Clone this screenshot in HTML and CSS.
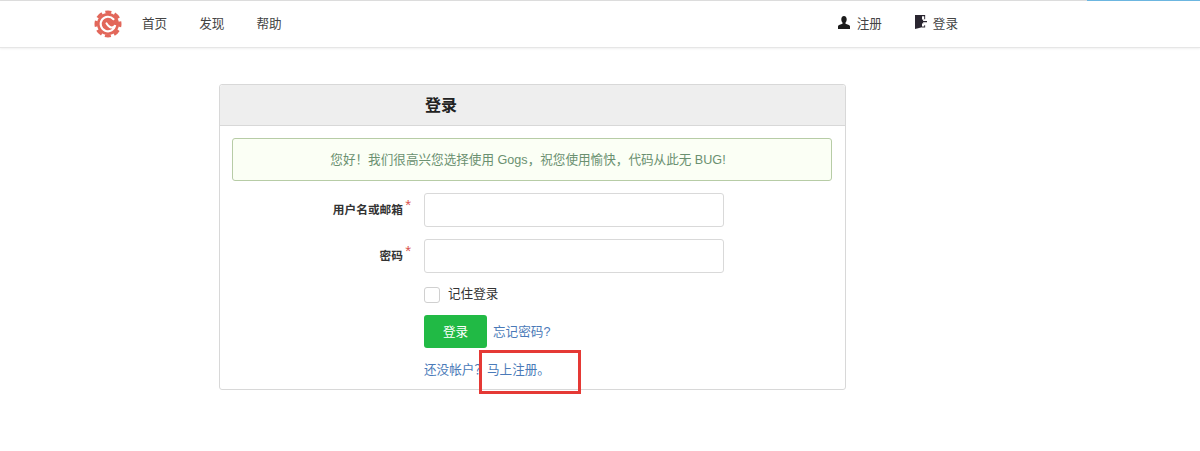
FILE: index.html
```html
<!DOCTYPE html>
<html lang="zh-CN">
<head>
    <meta charset="UTF-8">
    <title>登录 - Gogs</title>
    <link rel="stylesheet" href="styles.css">
</head>
<body>
<div class="top-line"><div class="top-progress"></div></div>
<nav class="navbar">
    <svg class="logo" viewBox="0 0 28 28" width="28" height="28">
        <circle cx="14" cy="14" r="11" fill="#e2675a"/>
        <circle cx="14" cy="14" r="12" fill="none" stroke="#e2675a" stroke-width="3" stroke-dasharray="6 3.420" stroke-dashoffset="3"/>
        <path fill="none" stroke="#fff" stroke-width="2.100" stroke-linecap="round" d="M19.500 9.200a7.300 7.300 0 1 0 1.700 6c-1 2.300-3.500 2.800-5.300 1.800-1.500-.8-2.600-2-3.400-3.600"/>
    </svg>
    <ul class="nav-links">
        <li><a href="#">首页</a></li>
        <li><a href="#">发现</a></li>
        <li><a href="#">帮助</a></li>
    </ul>
    <ul class="nav-links nav-right">
        <li>
            <a href="#">
                <svg class="user-icon" viewBox="0 0 12 13" width="12" height="13"><path fill="#1c1c1c" d="M6 0c1.700 0 2.700 1.300 2.700 3.200 0 1.300-.4 2.600-1.200 3.300v1.300c1.800.6 4.100 1.200 4.500 2.400V13H0v-2.800c.4-1.200 2.700-1.800 4.500-2.400V6.500C3.700 5.800 3.300 4.500 3.300 3.200 3.300 1.300 4.300 0 6 0z"/></svg>
                注册
            </a>
        </li>
        <li>
            <a href="#">
                <svg viewBox="0 0 13 15" width="12" height="14"><path fill="#2a2630" d="M0 0h11v4.500H10V1.200H7.600v12.100L0 15z"/><path fill="#2a2630" d="M10 11h1v2.500H7.600v-1H10z"/><path fill="#2a2630" d="M13 6.300v1.400H8.800v2L5.800 7l3-2.700v2z"/></svg>
                登录
            </a>
        </li>
    </ul>
</nav>

<div class="login-card">
    <h3 class="card-title"><span>登录</span></h3>
    <div class="card-body">
        <div class="message">您好！我们很高兴您选择使用 Gogs，祝您使用愉快，代码从此无 BUG!</div>
        <div class="field">
            <label class="required" for="user">用户名或邮箱</label>
            <input type="text" id="user">
        </div>
        <div class="field">
            <label class="required" for="password">密码</label>
            <input type="password" id="password">
        </div>
        <div class="inline-row remember">
            <span class="checkbox"></span>
            <span>记住登录</span>
        </div>
        <div class="inline-row actions">
            <button class="green-btn">登录</button>
            <a href="#">忘记密码?</a>
        </div>
        <div class="inline-row signup">
            <a href="#">还没帐户？马上注册。</a>
        </div>
    </div>
</div>
<div class="red-mark"></div>
</body>
</html>
```

FILE: styles.css
```css
* {
    margin: 0;
    padding: 0;
    box-sizing: border-box;
}

body {
    font-family: "Liberation Sans", "Noto Sans CJK SC", sans-serif;
    font-size: 12.6px;
    color: #333;
    background: #fff;
}

a {
    color: #4a7ab8;
    text-decoration: none;
}

.top-line {
    display: flex;
    justify-content: flex-end;
    height: 1px;
    background: #ddd;
}

.top-progress {
    width: 113px;
    background: #6cb6e0;
}

.navbar {
    display: flex;
    align-items: center;
    height: 47px;
    padding: 0 242px 4px 94px;
    border-bottom: 1px solid #e6e6e6;
    box-shadow: 0 1px 2px rgba(0, 0, 0, 0.06);
}

.logo {
    margin-top: 4px;
}

.nav-links {
    display: flex;
    gap: 32px;
    list-style: none;
    margin-left: 20px;
}

.nav-links a {
    display: flex;
    align-items: center;
    gap: 6px;
    color: #444;
}

.nav-right {
    gap: 33px;
    margin-left: auto;
}

.user-icon {
    margin-right: 1px;
}

.login-card {
    width: 627px;
    height: 306px;
    margin: 36px 0 0 219px;
    border: 1px solid #d8d8d8;
    border-radius: 3px;
}

.card-title {
    height: 41px;
    padding-left: 205px;
    font-size: 16px;
    line-height: 41px;
    color: #222;
    background: #eee;
    border-bottom: 1px solid #d8d8d8;
    border-radius: 3px 3px 0 0;
}

.card-body {
    padding: 12px 13px 0 12px;
}

.message {
    height: 43px;
    margin-bottom: 12px;
    padding-right: 8px;
    line-height: 42px;
    text-align: center;
    color: #6a9070;
    background: #fbfff5;
    border: 1px solid #b7cca6;
    border-radius: 3px;
}

.field {
    display: flex;
    align-items: center;
    height: 34px;
    margin-bottom: 12px;
}

.field label {
    width: 192px;
    padding: 0 21px 4px 0;
    text-align: right;
    font-size: 11.7px;
    font-weight: bold;
    color: #333;
    position: relative;
}

.required::after {
    content: "*";
    position: absolute;
    right: 13px;
    top: -4px;
    font-weight: normal;
    font-size: 15px;
    color: #d9534f;
}

.field input {
    width: 300px;
    height: 34px;
    border: 1px solid #d9d9d9;
    border-radius: 3px;
    outline: none;
}

.inline-row {
    display: flex;
    align-items: center;
    margin-left: 192px;
}

.remember {
    gap: 8px;
    height: 16px;
    margin-top: 14px;
    line-height: 14px;
}

.remember span:last-child {
    margin-bottom: 3px;
}

.checkbox {
    width: 16px;
    height: 16px;
    border: 1px solid #d0d0d0;
    border-radius: 3px;
}

.actions {
    gap: 6px;
    margin-top: 12px;
}

.actions a {
    margin-bottom: 3px;
}

.green-btn {
    width: 63px;
    height: 33px;
    padding-bottom: 3px;
    border: none;
    border-radius: 3px;
    background: #21ba45;
    color: #fff;
    font-family: inherit;
    font-size: 12.6px;
}

.signup {
    margin-top: 11px;
    height: 18px;
}

.red-mark {
    position: absolute;
    left: 479px;
    top: 350px;
    width: 102px;
    height: 44px;
    border: 3px solid #e53935;
}
```
